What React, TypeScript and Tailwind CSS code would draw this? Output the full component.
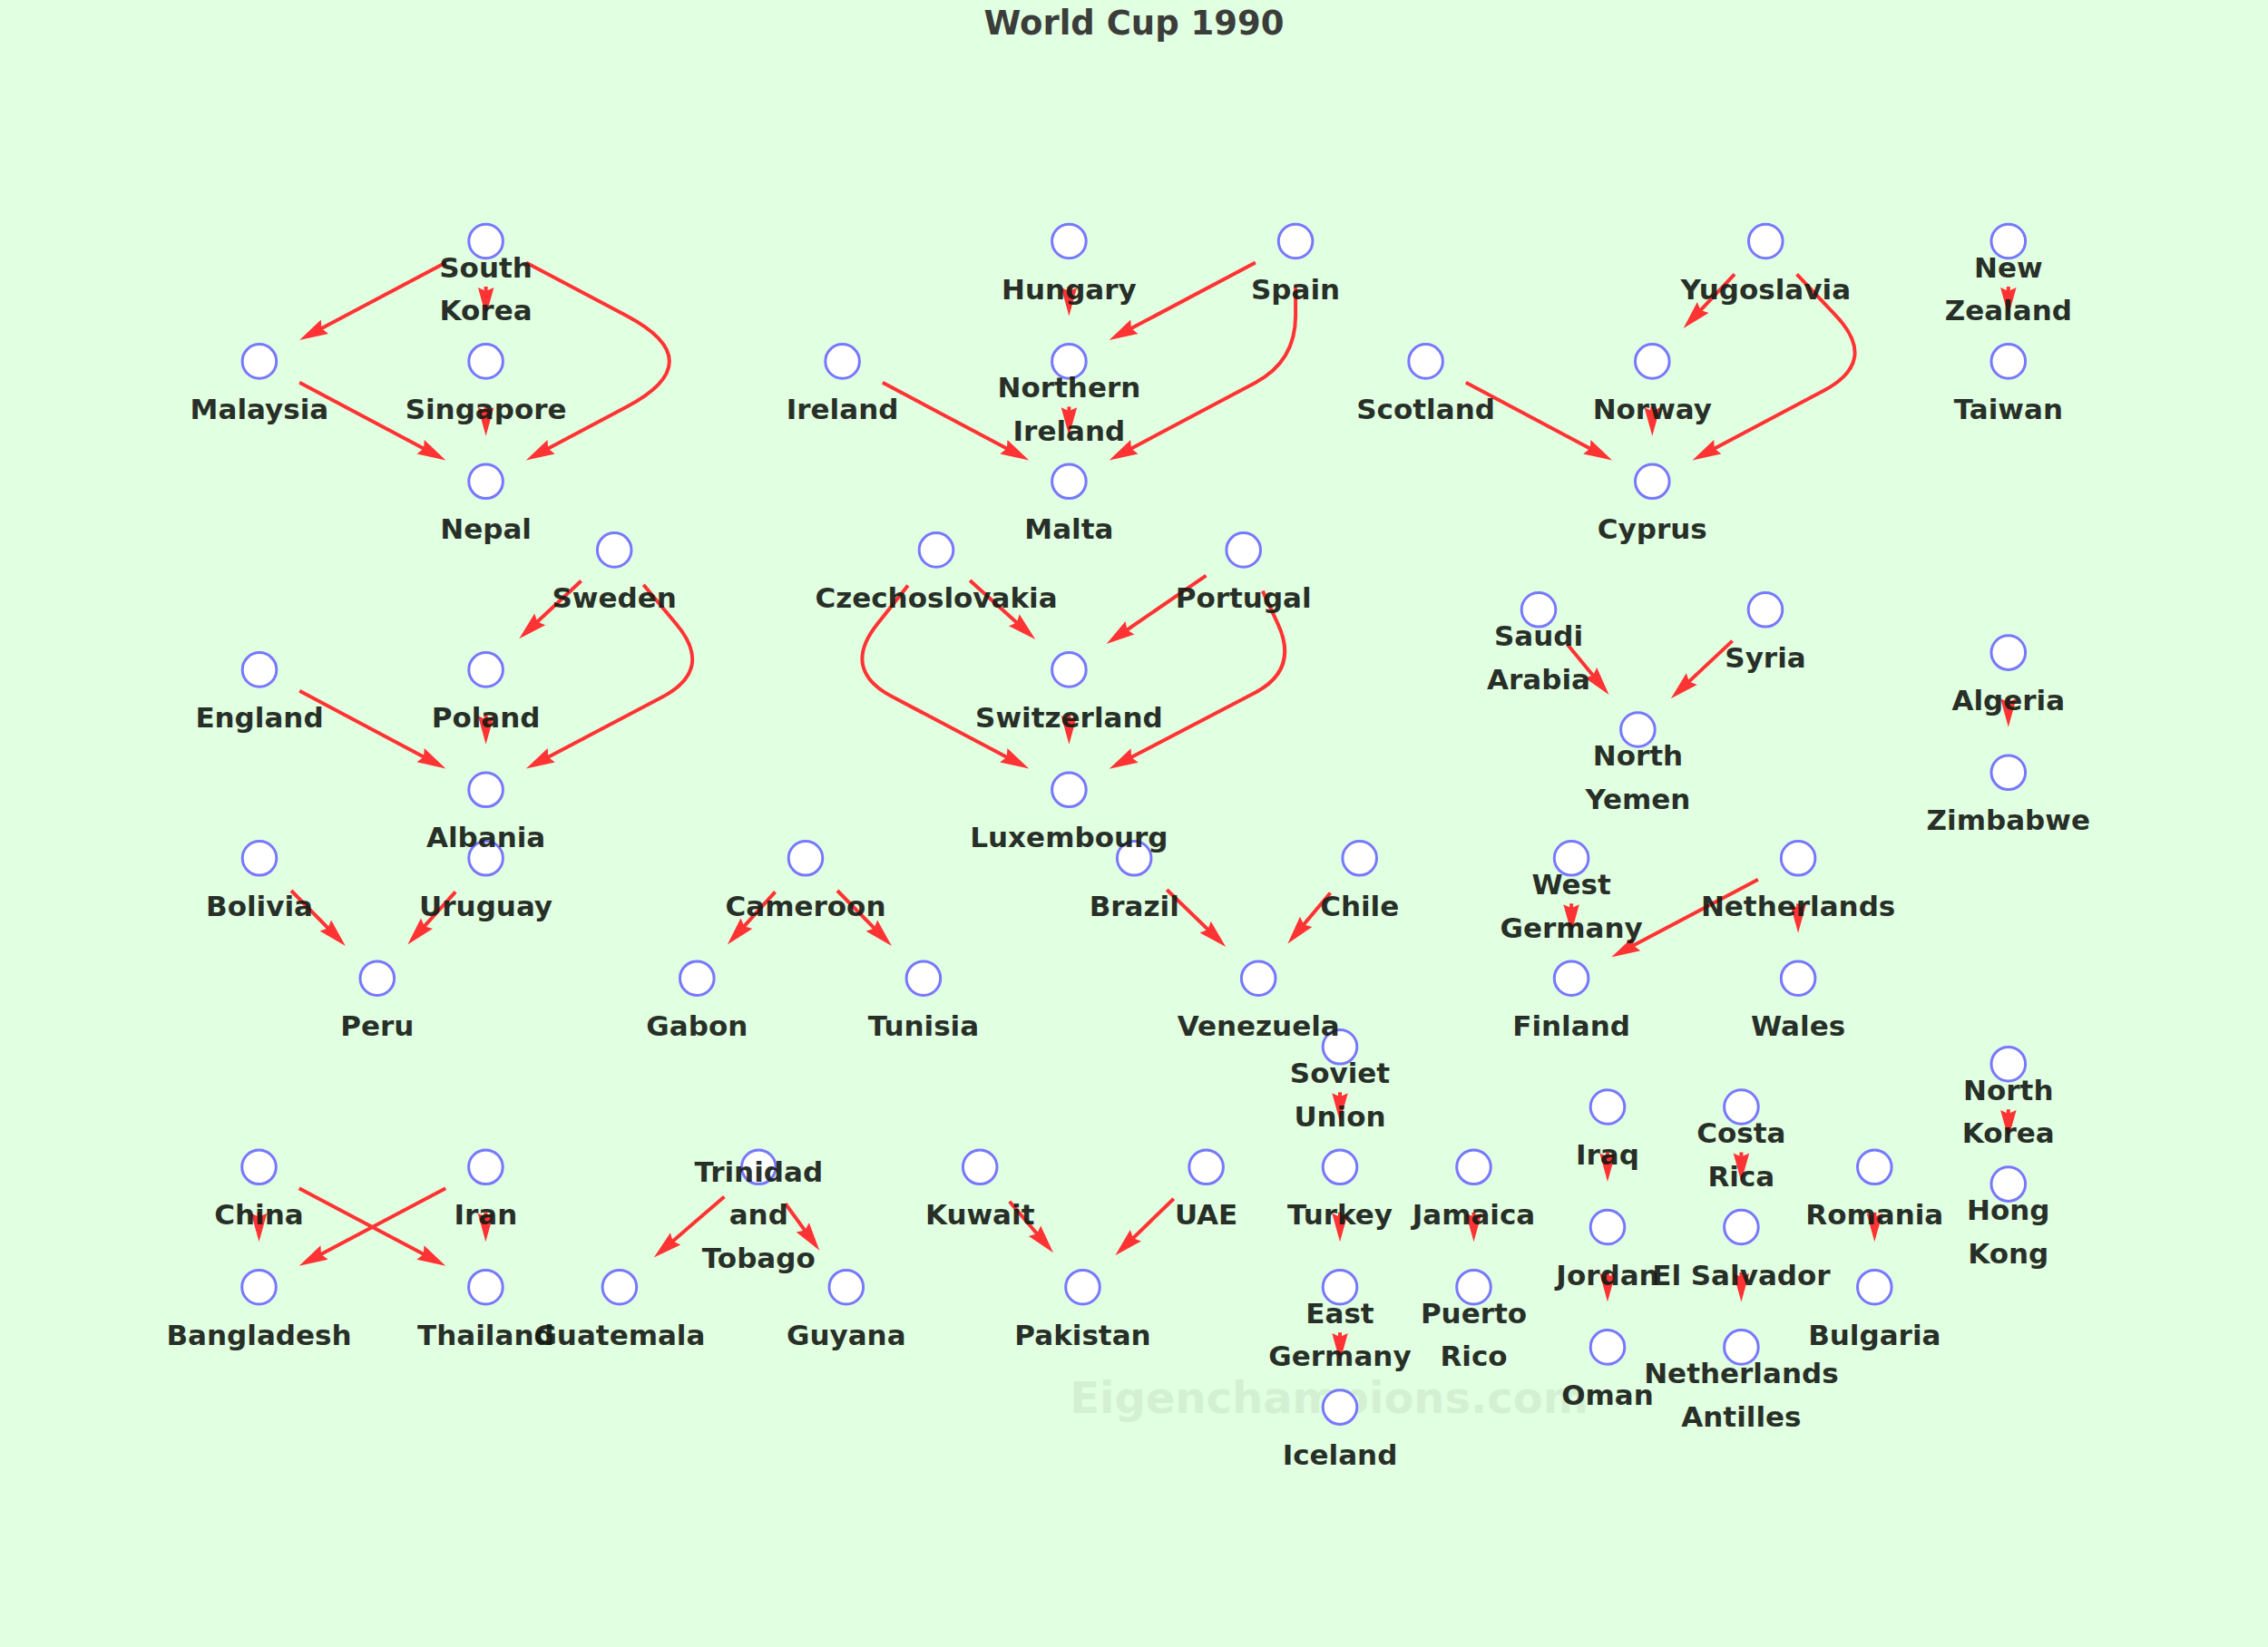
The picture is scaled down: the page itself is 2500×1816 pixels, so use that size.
type Pt = [number, number]

// node centres, in page pixels
const nodes: Record<string, { p: Pt; lines: string[] }> = {
  southKorea: { p: [535.6, 266], lines: ['South', 'Korea'] },
  malaysia: { p: [285.9, 398.4], lines: ['Malaysia'] },
  singapore: { p: [535.6, 398.4], lines: ['Singapore'] },
  nepal: { p: [535.6, 530.8], lines: ['Nepal'] },
  hungary: { p: [1178.4, 266], lines: ['Hungary'] },
  spain: { p: [1428.1, 266], lines: ['Spain'] },
  ireland: { p: [928.6, 398.4], lines: ['Ireland'] },
  northernIreland: { p: [1178.4, 398.4], lines: ['Northern', 'Ireland'] },
  malta: { p: [1178.4, 530.8], lines: ['Malta'] },
  yugoslavia: { p: [1946.3, 266], lines: ['Yugoslavia'] },
  scotland: { p: [1571.6, 398.4], lines: ['Scotland'] },
  norway: { p: [1821.3, 398.4], lines: ['Norway'] },
  cyprus: { p: [1821.3, 530.8], lines: ['Cyprus'] },
  newZealand: { p: [2213.8, 266], lines: ['New', 'Zealand'] },
  taiwan: { p: [2213.8, 398.4], lines: ['Taiwan'] },
  sweden: { p: [677.2, 606.4], lines: ['Sweden'] },
  england: { p: [286, 738.4], lines: ['England'] },
  poland: { p: [535.6, 738.4], lines: ['Poland'] },
  albania: { p: [535.6, 870.8], lines: ['Albania'] },
  czech: { p: [1032, 606.4], lines: ['Czechoslovakia'] },
  portugal: { p: [1370.7, 606.4], lines: ['Portugal'] },
  switzerland: { p: [1178.4, 738.4], lines: ['Switzerland'] },
  luxembourg: { p: [1178.4, 870.8], lines: ['Luxembourg'] },
  saudi: { p: [1696, 672.3], lines: ['Saudi', 'Arabia'] },
  syria: { p: [1946, 672.3], lines: ['Syria'] },
  northYemen: { p: [1805.4, 804.5], lines: ['North', 'Yemen'] },
  algeria: { p: [2213.8, 719.6], lines: ['Algeria'] },
  zimbabwe: { p: [2213.8, 851.8], lines: ['Zimbabwe'] },
  bolivia: { p: [286, 946.3], lines: ['Bolivia'] },
  uruguay: { p: [535.6, 946.3], lines: ['Uruguay'] },
  peru: { p: [415.8, 1078.7], lines: ['Peru'] },
  cameroon: { p: [888, 946.3], lines: ['Cameroon'] },
  gabon: { p: [768.3, 1078.7], lines: ['Gabon'] },
  tunisia: { p: [1017.9, 1078.7], lines: ['Tunisia'] },
  brazil: { p: [1250.2, 946.3], lines: ['Brazil'] },
  chile: { p: [1498.7, 946.3], lines: ['Chile'] },
  venezuela: { p: [1387.2, 1078.7], lines: ['Venezuela'] },
  westGermany: { p: [1732.1, 946.3], lines: ['West', 'Germany'] },
  netherlands: { p: [1982.1, 946.3], lines: ['Netherlands'] },
  finland: { p: [1732.1, 1078.7], lines: ['Finland'] },
  wales: { p: [1982.1, 1078.7], lines: ['Wales'] },
  sovietUnion: { p: [1477, 1154.3], lines: ['Soviet', 'Union'] },
  turkey: { p: [1477, 1286.8], lines: ['Turkey'] },
  eastGermany: { p: [1477, 1419.2], lines: ['East', 'Germany'] },
  iceland: { p: [1477, 1551.6], lines: ['Iceland'] },
  jamaica: { p: [1624.5, 1286.8], lines: ['Jamaica'] },
  puertoRico: { p: [1624.5, 1419.2], lines: ['Puerto', 'Rico'] },
  iraq: { p: [1772, 1220.5], lines: ['Iraq'] },
  jordan: { p: [1772, 1353], lines: ['Jordan'] },
  oman: { p: [1772, 1485.4], lines: ['Oman'] },
  costaRica: { p: [1919.4, 1220.5], lines: ['Costa', 'Rica'] },
  elSalvador: { p: [1919.4, 1353], lines: ['El Salvador'] },
  antilles: { p: [1919.4, 1485.4], lines: ['Netherlands', 'Antilles'] },
  romania: { p: [2066.3, 1286.8], lines: ['Romania'] },
  bulgaria: { p: [2066.3, 1419.2], lines: ['Bulgaria'] },
  northKorea: { p: [2213.8, 1173.2], lines: ['North', 'Korea'] },
  hongKong: { p: [2213.8, 1305.6], lines: ['Hong', 'Kong'] },
  china: { p: [285.5, 1286.8], lines: ['China'] },
  iran: { p: [535.4, 1286.8], lines: ['Iran'] },
  bangladesh: { p: [285.5, 1419.2], lines: ['Bangladesh'] },
  thailand: { p: [535.4, 1419.2], lines: ['Thailand'] },
  trinidad: { p: [836.3, 1286.8], lines: ['Trinidad', 'and', 'Tobago'] },
  guatemala: { p: [682.9, 1419.2], lines: ['Guatemala'] },
  guyana: { p: [932.8, 1419.2], lines: ['Guyana'] },
  kuwait: { p: [1080.2, 1286.8], lines: ['Kuwait'] },
  uae: { p: [1329.6, 1286.8], lines: ['UAE'] },
  pakistan: { p: [1193.5, 1419.2], lines: ['Pakistan'] },
}

// [from, to, optional bend point]
const edges: [string, string, Pt?][] = [
  ['southKorea', 'malaysia'],
  ['southKorea', 'singapore'],
  ['southKorea', 'nepal', [785.3, 398.4]],
  ['malaysia', 'nepal'],
  ['singapore', 'nepal'],
  ['hungary', 'northernIreland'],
  ['spain', 'northernIreland'],
  ['spain', 'malta', [1428.1, 398.4]],
  ['ireland', 'malta'],
  ['northernIreland', 'malta'],
  ['yugoslavia', 'norway'],
  ['yugoslavia', 'cyprus', [2071.3, 398.4]],
  ['scotland', 'cyprus'],
  ['norway', 'cyprus'],
  ['newZealand', 'taiwan'],
  ['sweden', 'poland'],
  ['sweden', 'albania', [787.5, 738.4]],
  ['england', 'albania'],
  ['poland', 'albania'],
  ['czech', 'switzerland'],
  ['portugal', 'switzerland'],
  ['czech', 'luxembourg', [927, 738.4]],
  ['portugal', 'luxembourg', [1432, 738.4]],
  ['switzerland', 'luxembourg'],
  ['saudi', 'northYemen'],
  ['syria', 'northYemen'],
  ['algeria', 'zimbabwe'],
  ['bolivia', 'peru'],
  ['uruguay', 'peru'],
  ['cameroon', 'gabon'],
  ['cameroon', 'tunisia'],
  ['brazil', 'venezuela'],
  ['chile', 'venezuela'],
  ['westGermany', 'finland'],
  ['netherlands', 'finland'],
  ['netherlands', 'wales'],
  ['sovietUnion', 'turkey'],
  ['turkey', 'eastGermany'],
  ['eastGermany', 'iceland'],
  ['jamaica', 'puertoRico'],
  ['iraq', 'jordan'],
  ['jordan', 'oman'],
  ['costaRica', 'elSalvador'],
  ['elSalvador', 'antilles'],
  ['romania', 'bulgaria'],
  ['northKorea', 'hongKong'],
  ['china', 'bangladesh'],
  ['china', 'thailand'],
  ['iran', 'bangladesh'],
  ['iran', 'thailand'],
  ['trinidad', 'guatemala'],
  ['trinidad', 'guyana'],
  ['kuwait', 'pakistan'],
  ['uae', 'pakistan'],
]

const GAP = 50
const HEAD_LEN = 31.5
const HEAD_HALF = 8.75

const unit = (a: Pt, b: Pt): [Pt, number] => {
  const dx = b[0] - a[0]
  const dy = b[1] - a[1]
  const len = Math.hypot(dx, dy)
  return [[dx / len, dy / len], len]
}
const f = (n: number) => n.toFixed(1)

function Edge({ from, to, via }: { from: Pt; to: Pt; via?: Pt }) {
  const [u1, len1] = unit(from, via ?? to)
  const [u2, len2] = via ? unit(via, to) : [u1, len1]
  const start: Pt = [from[0] + u1[0] * GAP, from[1] + u1[1] * GAP]
  const tip: Pt = [to[0] - u2[0] * GAP, to[1] - u2[1] * GAP]
  const shaftEnd: Pt = [tip[0] - u2[0] * 25, tip[1] - u2[1] * 25]

  let d = `M${f(start[0])},${f(start[1])}`
  if (via) {
    const r = 0.38 * Math.min(len1, len2)
    const p1: Pt = [via[0] - u1[0] * r, via[1] - u1[1] * r]
    const p2: Pt = [via[0] + u2[0] * r, via[1] + u2[1] * r]
    d += ` L${f(p1[0])},${f(p1[1])} Q${f(via[0])},${f(via[1])} ${f(p2[0])},${f(p2[1])}`
  }
  d += ` L${f(shaftEnd[0])},${f(shaftEnd[1])}`

  const n: Pt = [-u2[1], u2[0]]
  const back: Pt = [tip[0] - u2[0] * HEAD_LEN, tip[1] - u2[1] * HEAD_LEN]
  const notch: Pt = [tip[0] - u2[0] * (HEAD_LEN - 4), tip[1] - u2[1] * (HEAD_LEN - 4)]
  const head = [
    tip,
    [back[0] + n[0] * HEAD_HALF, back[1] + n[1] * HEAD_HALF],
    notch,
    [back[0] - n[0] * HEAD_HALF, back[1] - n[1] * HEAD_HALF],
  ]
    .map(p => `${f(p[0])},${f(p[1])}`)
    .join(' ')

  return (
    <g>
      <path d={d} fill="none" className="stroke-[#ff3333]" strokeWidth={4} />
      <polygon points={head} className="fill-[#ff3333]" />
    </g>
  )
}

export default function App() {
  const list = Object.values(nodes)

  return (
    <div className="flex flex-col w-[2500px] h-[1816px] bg-[#e1ffe1] font-['DejaVu_Sans','Verdana',sans-serif]">
      <h1 className="h-[51px] leading-[51px] text-center text-[37px] font-bold text-[#3b3d3b]">
        World Cup 1990
      </h1>

      <svg width={2500} height={1765} viewBox="0 51 2500 1765" className="block">
        <text
          x={1465}
          y={1558}
          textAnchor="middle"
          className="text-[48px] font-bold fill-[#000000] opacity-[0.055]"
        >
          Eigenchampions.com
        </text>

        {edges.map(([a, b, via]) => (
          <Edge key={`${a}-${b}`} from={nodes[a].p} to={nodes[b].p} via={via} />
        ))}

        {list.map(node => (
          <circle
            key={node.lines.join(' ')}
            cx={node.p[0]}
            cy={node.p[1]}
            r={18.8}
            strokeWidth={3}
            className="fill-white stroke-[#7878ff]"
          />
        ))}

        {list.map(node => {
          const first = node.p[1] + 63.5 - (node.lines.length - 1) * 23.75
          return (
            <text
              key={node.lines.join(' ')}
              x={node.p[0]}
              textAnchor="middle"
              className="text-[31px] font-bold fill-[#141914] opacity-90"
            >
              {node.lines.map((line, i) => (
                <tspan key={line} x={node.p[0]} y={first + i * 47.5}>
                  {line}
                </tspan>
              ))}
            </text>
          )
        })}
      </svg>
    </div>
  )
}
